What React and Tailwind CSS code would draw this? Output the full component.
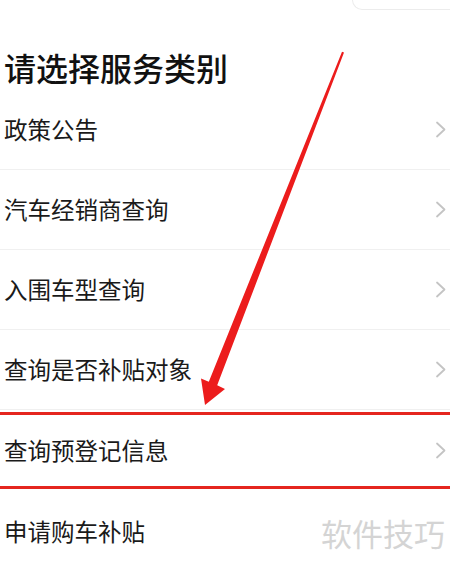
import React from "react";

const FONT = { fontFamily: '"Noto Sans CJK SC", "Noto Sans", sans-serif' };

function Chevron() {
  return (
    <svg width="12" height="17" viewBox="0 0 12 17" className="shrink-0">
      <path d="M2 1.5 L9.5 8.5 L2 15.5" fill="none" stroke="#c4c4c4" strokeWidth="1.8" strokeLinecap="round" strokeLinejoin="round" />
    </svg>
  );
}

function Row({ label, className = "h-[80px] border-b border-[#f0f0f0]" }) {
  return (
    <div className={`flex items-center justify-between pl-[4px] pr-[3px] ${className}`}>
      <span className="text-[23.5px] leading-none text-[#1a1a1a]">{label}</span>
      <Chevron />
    </div>
  );
}

export default function App() {
  return (
    <div className="relative w-[450px] h-[568px] overflow-hidden bg-white" style={FONT}>
      <div className="flex justify-end h-[10px]">
        <div className="w-[98px] h-[10px] border-b border-l border-[#ececec] rounded-bl-[14px]" />
      </div>
      <div className="pl-[4px] pt-[37px] h-[80px]">
        <h1 className="text-[32px] leading-[40px] font-medium text-[#111]">请选择服务类别</h1>
      </div>
      <Row label="政策公告" />
      <Row label="汽车经销商查询" />
      <Row label="入围车型查询" />
      <Row label="查询是否补贴对象" />
      <div className="mt-[2px] border-y-[3px] border-[#e5261f]">
        <Row label="查询预登记信息" className="h-[71px]" />
      </div>
      <div className="flex items-center justify-between pl-[4px] pr-[5px] h-[86px]">
        <span className="text-[23.5px] leading-none text-[#1a1a1a]">申请购车补贴</span>
        <span className="text-[31px] leading-none text-[#d4d4d4]">软件技巧</span>
      </div>
      <svg className="absolute inset-0 pointer-events-none" width="450" height="568" viewBox="0 0 450 568">
        <polygon
          points="344,52.6 217.2,385.2 225,389 205,405 201,378.5 208.8,381.8 342,51.8"
          fill="#ec1c1c"
        />
      </svg>
    </div>
  );
}
